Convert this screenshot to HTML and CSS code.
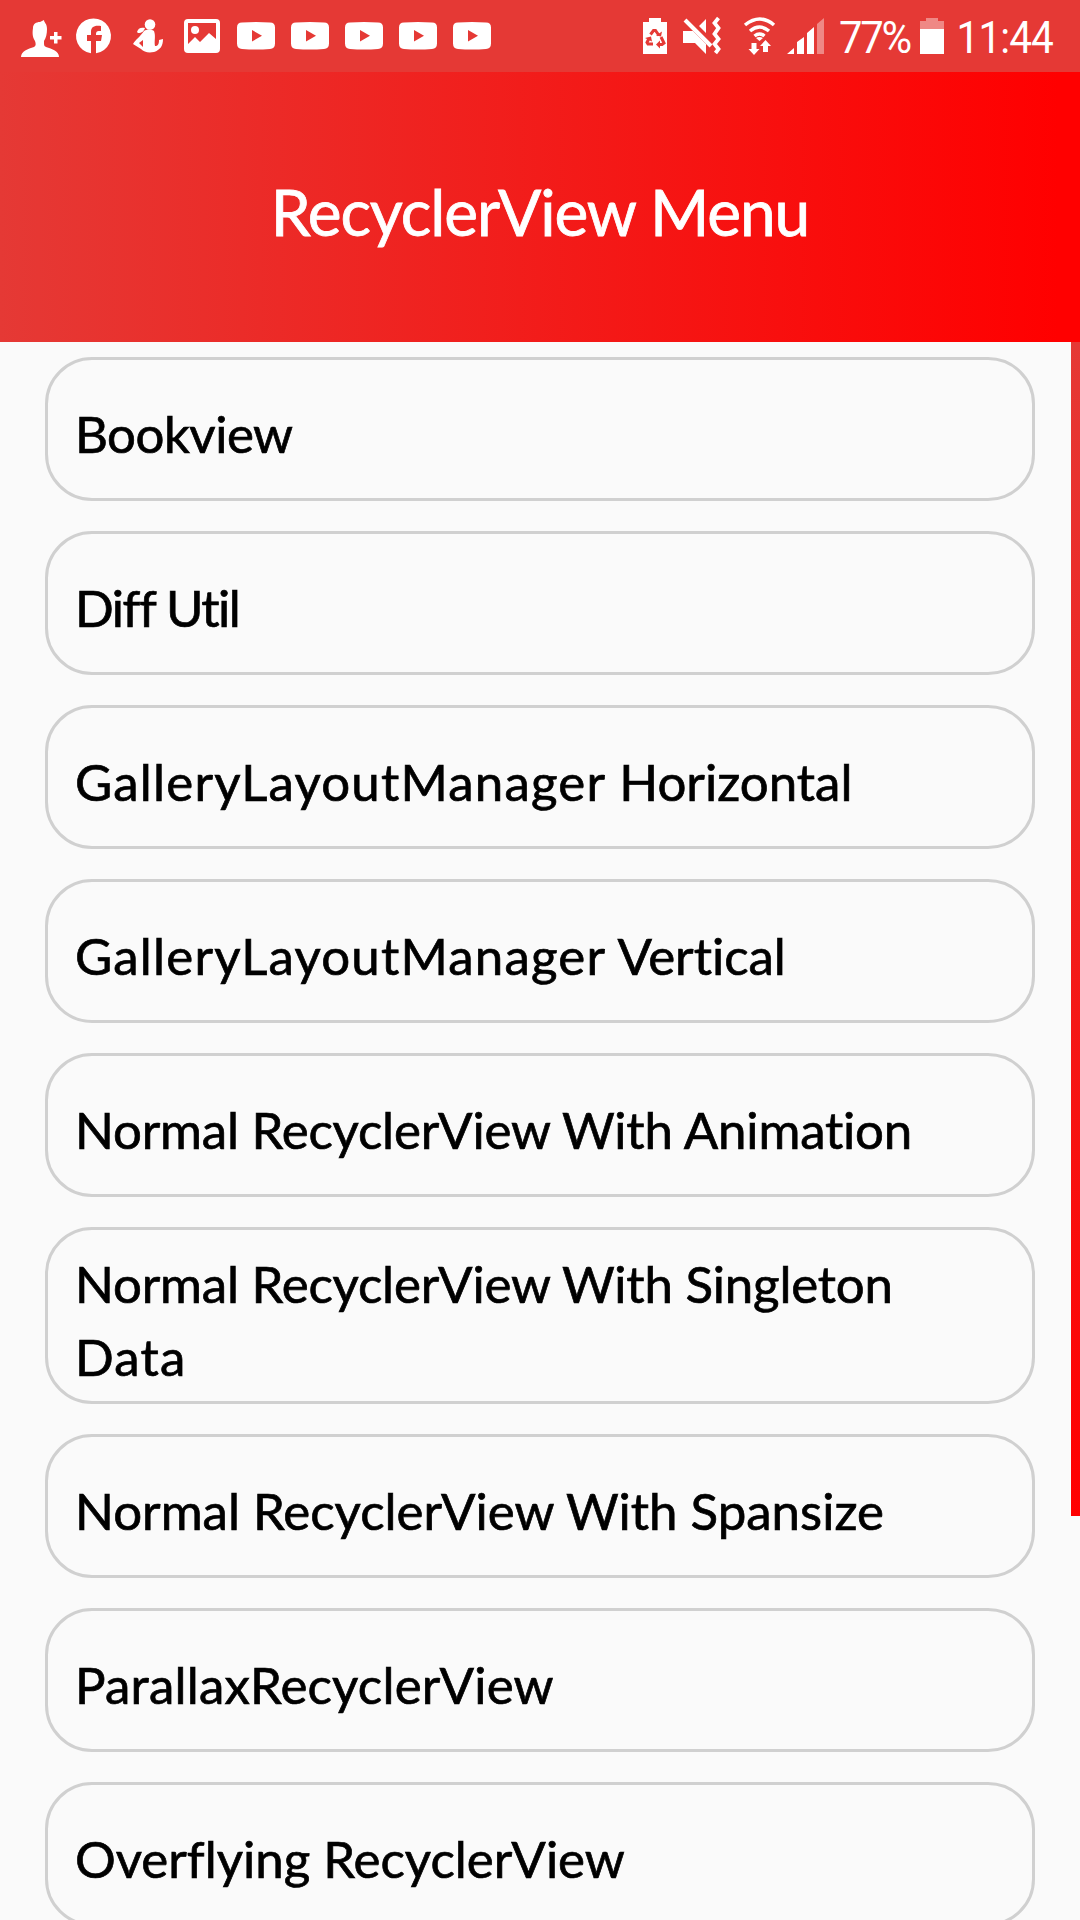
FILE: index.html
```
<!DOCTYPE html>
<html lang="en">

<head>
    <meta charset="UTF-8">
    <title>RecyclerView Menu</title>
    <link rel="stylesheet" href="styles.css">
</head>

<body>
    <div class="status-bar">
        <svg class="status-icons" width="500" height="72" viewBox="0 0 500 72" fill="#fff">
            <!-- add contact -->
            <path d="M21 57c0-6 7-8 13-10 2-1 2-3 1-6-2-3-3-7-2-13 0-4 3-6 7-6l4-2c0 3 3 3 3 9 0 5-1 9-3 12 0 4 0 5 2 6 6 2 13 4 13 10z" />
            <path d="M54 32h3.500v4h4v3.500h-4v4H54v-4h-4V36h4z" />
            <!-- facebook -->
            <path d="M91 53.300V41h-4v-6h4v-3c0-5 3-7 10-6v5c-4 0-5 0-5 4h6l-1 6h-5v12.300a17.500 17.500 0 1 0-5 0z" />
            <!-- person -->
            <circle cx="150" cy="24.500" r="5.300" />
            <path d="M137 32c1-4 4-5 8-4-1 3-3 5-7 5z" />
            <path fill-rule="evenodd" d="M144 31c3-2 7-2 10 0 2 5 0 10 1 15 3 0 4-2 4-6l4-1c0 7-3 11-9 13-6 1-10 0-13-3l-8-5c3-5 7-7 11-13zm-1 9l-4 3 4 4z" />
            <!-- picture -->
            <path fill-rule="evenodd" d="M188 19h28q4 0 4 4v26q0 4-4 4h-28q-4 0-4-4V23q0-4 4-4zm0 4v21l7-7 5 5 9-9 7 6V23z" />
            <circle cx="195" cy="30" r="4" />
            <!-- youtube -->
            <path id="yt" fill-rule="evenodd" d="M242 22.500q14-1 28 0 5 0 5 5v16q0 5-5 5.500-14 1-28 0-5-.5-5-5.500v-16q0-5 5-5zm10 7.500v11.500l10-5.700z" />
            <use href="#yt" x="54" />
            <use href="#yt" x="108" />
            <use href="#yt" x="162" />
            <use href="#yt" x="216" />
        </svg>
        <div class="status-right">
            <svg width="190" height="72" viewBox="636 0 190 72" fill="#fff">
                <!-- power saving -->
                <path d="M649 18h12v4h6v32h-24V22h6z" />
                <g fill="none" stroke="#e53935" stroke-width="3">
                    <path d="M650.500 34.500l3-4h2l3.500 5M661 37l3 6-2 1.500h-4M653 44h-5l-1-1.500 2-4" />
                </g>
                <path d="M660 40.500v8l-4-4zM645 38l6-1.500 1 5zM656 35.500l5 1 1-5z" fill="#e53935" />
                <!-- mute / vibrate -->
                <path d="M683 31h10l13 13v10l-11-11h-12zM706 19v14l-7-7z" />
                <path d="M685 20l26 26" fill="none" stroke="#fff" stroke-width="4" />
                <path d="M719 18l-4 5 4 5-4 6 4 5-4 5 4 5-3 4" fill="none" stroke="#fff" stroke-width="3.800" transform="translate(-.5 0)" />
                <!-- wifi -->
                <g fill="none" stroke="#fff" stroke-width="3.500">
                    <path d="M745 25q15-12 29 0M750 31q9.500-8 19 0M754.500 36q5-4 10 0" />
                </g>
                <path d="M756 38q3.500-2 7 0l-3.500 3z" />
                <path d="M751.500 43h5v6h3l-5.500 6-5.500-6h3zM763 52v-6h-3l5.500-6 5.500 6h-3v6z" />
                <!-- signal -->
                <path d="M787 54l7-6v6zM797 42l7-5v17h-7zM807 33l7-6v27h-7z" />
                <path d="M817 24l7-6v36h-7z" opacity=".4" />
            </svg>
            <span class="percent">77%</span>
            <svg width="24" height="72" viewBox="0 0 24 72" fill="#fff">
                <path d="M6 18h12v3h6v8H0v-8h6z" opacity=".4" />
                <path d="M0 29h24v25H0z" />
            </svg>
            <span class="clock">11:44</span>
        </div>
    </div>

    <header class="toolbar">
        <h1>RecyclerView Menu</h1>
    </header>

    <main class="menu">
        <ul class="menu-list">
            <li class="narrow">Bookview</li>
            <li class="tight">Diff Util</li>
            <li><span class="wide">GalleryLayoutManager</span>&nbsp;Horizontal</li>
            <li><span class="wide">GalleryLayoutManager</span>&nbsp;Vertical</li>
            <li class="snug">Normal RecyclerView With Animation</li>
            <li><span class="snug">Normal RecyclerView With Singleton<br><span class="wide">Data</span></span></li>
            <li>Normal RecyclerView With Spansize</li>
            <li class="loose">ParallaxRecyclerView</li>
            <li>Overflying RecyclerView</li>
        </ul>
        <div class="scrollbar"></div>
    </main>
</body>

</html>
```

FILE: styles.css
```
:root {
    --primary-color: #e53935;
    --accent-color: #ff0000;
    --background-color: #fafafa;
    --border-color: #d0d0d0;
}

* {
    margin: 0;
    padding: 0;
    box-sizing: border-box;
}

body {
    font-family: Lato, sans-serif;
    font-variant-ligatures: none;
    background: var(--background-color);
    height: 1920px;
    overflow: hidden;
    display: flex;
    flex-direction: column;
}

.status-bar {
    flex: none;
    height: 72px;
    display: flex;
    justify-content: space-between;
    background: var(--primary-color);
    color: #fff;
}

.status-right {
    display: flex;
    align-items: center;
    width: 444px;
    font-family: Roboto, sans-serif;
    font-size: 45px;
    line-height: 72px;
    white-space: nowrap;
}

.percent {
    width: 94px;
    padding: 3px 0 0 14px;
    letter-spacing: -2.5px;
    transform: scaleX(0.93);
    transform-origin: left;
}

.clock {
    padding: 3px 0 0 14px;
    letter-spacing: -1px;
    transform: scaleX(0.9);
    transform-origin: left;
}

.toolbar {
    flex: none;
    height: 270px;
    display: flex;
    align-items: center;
    justify-content: center;
    background: linear-gradient(90deg, var(--primary-color), var(--accent-color) 98%);
}

.toolbar h1 {
    color: #fff;
    font-size: 64px;
    font-weight: 400;
    letter-spacing: -1.1px;
    white-space: nowrap;
    padding-top: 9px;
    -webkit-text-stroke: 0.8px;
}

.menu {
    flex: 1;
    min-height: 0;
    display: flex;
}

.menu-list {
    flex: 1;
    padding: 15px 36px 0 45px;
    display: flex;
    flex-direction: column;
    gap: 30px;
    list-style: none;
}

.menu-list li {
    flex: none;
    min-height: 144px;
    display: flex;
    align-items: center;
    padding: 17px 27px 8px;
    border: 3px solid var(--border-color);
    border-radius: 47px;
    color: #000;
    font-size: 51px;
    line-height: 73px;
    white-space: nowrap;
    -webkit-text-stroke: 0.7px;
}

/* tracking */
.menu-list .wide {
    letter-spacing: 1.2px;
}

.menu-list .loose {
    letter-spacing: 0.2px;
}

.menu-list .snug {
    letter-spacing: -0.2px;
}

.menu-list .narrow {
    letter-spacing: -0.5px;
}

.menu-list .tight {
    letter-spacing: -1.5px;
}

.scrollbar {
    width: 9px;
    height: 1174px;
    background: linear-gradient(var(--primary-color), var(--accent-color));
}
```
